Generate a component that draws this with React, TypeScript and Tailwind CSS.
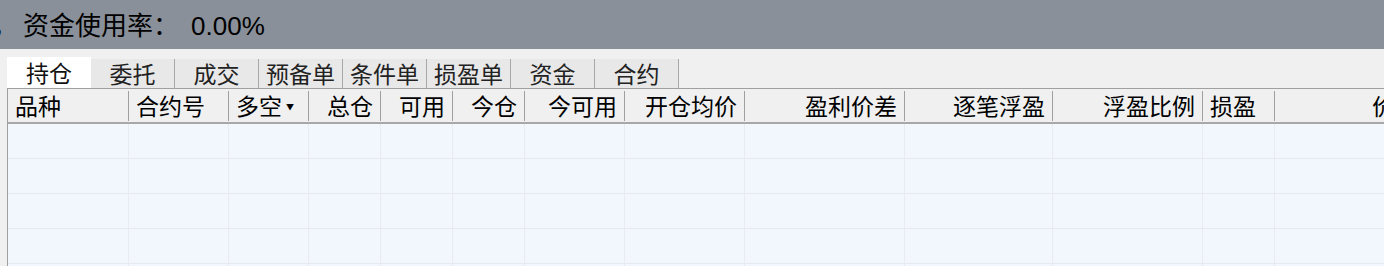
import React from 'react'

type Col = { label: string; w: number; align: 'left' | 'right'; sort?: boolean }

// position table columns (px widths read off the screen)
const columns: Col[] = [
  { label: '品种', w: 121, align: 'left' },
  { label: '合约号', w: 100, align: 'left' },
  { label: '多空', w: 80, align: 'left', sort: true },
  { label: '总仓', w: 72, align: 'right' },
  { label: '可用', w: 72, align: 'right' },
  { label: '今仓', w: 72, align: 'right' },
  { label: '今可用', w: 100, align: 'right' },
  { label: '开仓均价', w: 120, align: 'right' },
  { label: '盈利价差', w: 160, align: 'right' },
  { label: '逐笔浮盈', w: 148, align: 'right' },
  { label: '浮盈比例', w: 150, align: 'right' },
  { label: '损盈', w: 72, align: 'left' },
  { label: '价格', w: 151, align: 'right' },
]

const tabs = ['持仓', '委托', '成交', '预备单', '条件单', '损盈单', '资金', '合约']

const sans = { fontFamily: '"Noto Sans CJK SC", "Liberation Sans", sans-serif' }

export default function App() {
  return (
    <div className="w-[1384px] h-[266px] overflow-hidden bg-[#f0f0f0]" style={sans}>
      {/* account summary bar (scrolled, so the leading comma is clipped) */}
      <div className="h-[49px] bg-[#8a9099] flex items-center overflow-hidden whitespace-nowrap">
        <span className="text-[26px] leading-none text-black [text-spacing-trim:space-all]">
          <span className="ml-[-8px] mr-[5px]">，</span>资金使用率：
          <span className="ml-[12px]" style={{ fontFamily: '"Liberation Sans", sans-serif' }}>
            0.00%
          </span>
        </span>
      </div>

      {/* tabs */}
      <div className="flex items-end h-[39px] pl-[7px]">
        {tabs.map((t, i) =>
          i === 0 ? (
            <div key={t} className="w-[84px] h-[31px] bg-white flex items-center justify-center text-[23px] text-[#111]">
              {t}
            </div>
          ) : (
            <div
              key={t}
              className="w-[84px] h-[29px] bg-[#e8e8e8] border-r border-[#a8a8a8] flex items-center justify-center text-[23px] text-[#222]"
            >
              {t}
            </div>
          )
        )}
      </div>

      {/* grid */}
      <div className="ml-[7px] border-l border-t border-[#a0a0a0] w-[1500px]">
        <div className="flex h-[35px] items-center bg-[#f0f0f0] border-b-2 border-[#a8a8a8]">
          {columns.map((c) => (
            <div
              key={c.label}
              style={{ width: c.w }}
              className={`h-[30px] shrink-0 border-r border-[#a0a0a0] flex items-center px-[7px] text-[23px] text-black leading-none ${
                c.align === 'right' ? 'justify-end' : 'justify-start'
              }`}
            >
              {c.label}
              {c.sort && <span className="ml-[4px] text-[8px] mt-[2px]">▼</span>}
            </div>
          ))}
        </div>
        {[0, 1, 2, 3, 4].map((r) => (
          <div key={r} className="flex h-[35px] bg-[#f2f7fe] border-b border-[#e6e9ee]">
            {columns.map((c) => (
              <div key={c.label} style={{ width: c.w }} className="shrink-0 border-r border-[#e8ebef]" />
            ))}
          </div>
        ))}
      </div>
    </div>
  )
}
